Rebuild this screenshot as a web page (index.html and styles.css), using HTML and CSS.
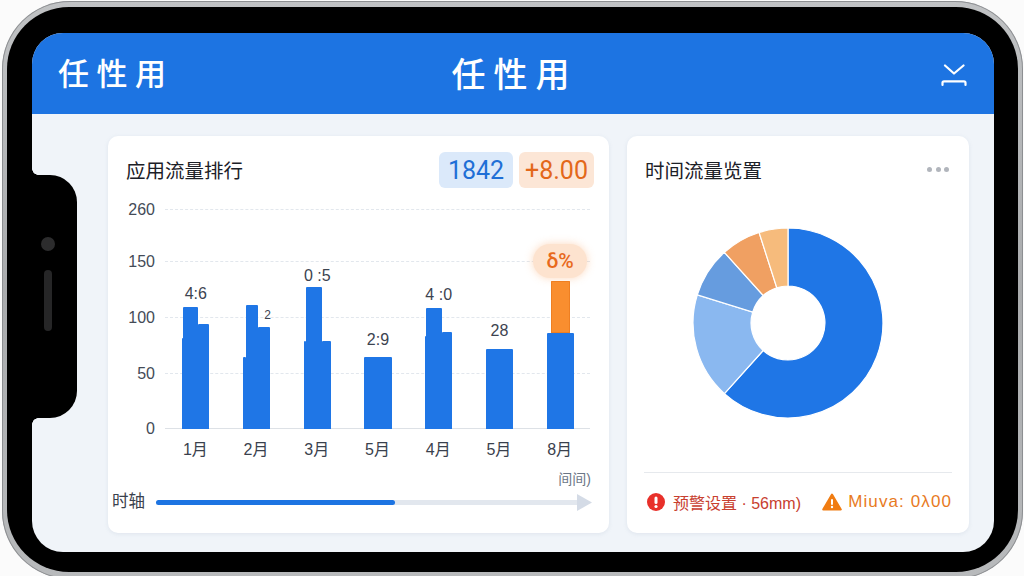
FILE: index.html
```html
<!DOCTYPE html>
<html lang="zh">
<head>
<meta charset="utf-8">
<title>任性用</title>
<link rel="stylesheet" href="styles.css">
</head>
<body>
<div class="phone">
  <div class="bezel">
    <div class="screen">
      <div class="notch"><span class="camera"></span><span class="speaker"></span></div>
      <header class="appbar">
        <div class="app-title">任性用</div>
        <div class="app-center">任性用</div>
        <svg class="app-icon" width="26" height="24" viewBox="0 0 26 24"><path d="M4 1.500l9 8 9.500-8M1.500 21v-2.200q0-1.500 1.500-1.500h20q1.500 0 1.500 1.500V21" fill="none" stroke="#fff" stroke-width="2.200" stroke-linecap="round" stroke-linejoin="round"/></svg>
      </header>
      <main class="content">
        <section class="card card-rank">
          <div class="card-head head-rank">
            <h2 class="card-title">应用流量排行</h2>
            <div class="badges"><span class="badge badge-blue">1842</span><span class="badge badge-orange">+8.00</span></div>
          </div>
          <div class="chart">
            <div class="row row-first"><span class="tick">260</span><span class="line"></span></div>
            <div class="row"><span class="tick">150</span><span class="line"></span></div>
            <div class="row"><span class="tick">100</span><span class="line"></span></div>
            <div class="row row-short"><span class="tick">50</span><span class="line"></span></div>
            <div class="row row-last"><span class="tick">0</span><span class="line line-base"></span></div>
            <div class="bars">
              <div class="slot"><span class="val val-a">4:6</span><div class="bar"><i style="width:1px;height:91px"></i><i style="width:15px;height:122px"></i><i style="width:11px;height:105px"></i></div></div>
              <div class="slot"><span class="val val-tiny">2</span><div class="bar"><i style="width:3px;height:72px"></i><i style="width:12.500px;height:124px"></i><i style="width:12px;height:102px"></i></div></div>
              <div class="slot"><span class="val val-c">0 :5</span><div class="bar"><i style="width:2px;height:88px"></i><i style="width:16px;height:142px"></i><i style="width:9px;height:88px"></i></div></div>
              <div class="slot"><span class="val val-d">2:9</span><div class="bar"><i style="width:28px;height:72px"></i></div></div>
              <div class="slot"><span class="val val-a">4 :0</span><div class="bar"><i style="width:1.500px;height:93px"></i><i style="width:16px;height:121px"></i><i style="width:10px;height:97px"></i></div></div>
              <div class="slot"><span class="val val-f">28</span><div class="bar"><i style="width:27.500px;height:80px"></i></div></div>
              <div class="slot"><span class="pill">δ%</span><div class="bar bar-stack"><i class="seg-orange" style="width:19px;height:52px"></i><i style="width:27px;height:96px"></i></div></div>
            </div>
          </div>
          <div class="months"><span>1月</span><span>2月</span><span>3月</span><span>5月</span><span>4月</span><span>5月</span><span>8月</span></div>
          <div class="note">间间)</div>
          <div class="timeline">
            <span class="timeline-label">时轴</span>
            <div class="track"><div class="track-fill" style="width:239px"></div></div>
            <svg class="track-arrow" width="15" height="17" viewBox="0 0 15 17"><path d="M0 0l15 8.500L0 17z" fill="#d4dbe6"/></svg>
          </div>
        </section>
        <section class="card card-time">
          <div class="card-head">
            <h2 class="card-title">时间流量览置</h2>
            <div class="dots"><span></span><span></span><span></span></div>
          </div>
          <svg class="donut" width="192" height="192" viewBox="-96 -96 192 192">
            <g stroke="#fff" stroke-width="1.200">
              <path fill="#1f76e6" d="M0-95A95 95 0 1 1-63.600 70.600L-24.800 27.500A37 37 0 1 0 0-37Z"/>
              <path fill="#8ab8f0" d="M-63.600 70.600A95 95 0 0 1-90.700-28.100L-35.300-10.900A37 37 0 0 0-24.800 27.500Z"/>
              <path fill="#669cdf" d="M-90.700-28.100A95 95 0 0 1-63.600-70.600L-24.800-27.500A37 37 0 0 0-35.300-10.900Z"/>
              <path fill="#f0a062" d="M-63.600-70.600A95 95 0 0 1-28.900-90.500L-11.200-35.200A37 37 0 0 0-24.800-27.500Z"/>
              <path fill="#f6bb7c" d="M-28.900-90.500A95 95 0 0 1 0-95V-37A37 37 0 0 0-11.200-35.200Z"/>
            </g>
          </svg>
          <div class="divider"></div>
          <div class="alerts">
            <div class="alert alert-red">
              <svg width="18" height="18" viewBox="0 0 18 18"><circle cx="9" cy="9" r="9" fill="#e8302a"/><rect x="7.500" y="3.500" width="3" height="7.500" rx="1.500" fill="#fff"/><circle cx="9" cy="13.500" r="1.600" fill="#fff"/></svg>
              <span>预警设置 · 56mm)</span>
            </div>
            <div class="alert alert-orange">
              <svg width="20" height="18" viewBox="0 0 20 18"><path d="M10 1.500L18.800 16.500H1.200Z" fill="#f07c12" stroke="#f07c12" stroke-width="2" stroke-linejoin="round"/><rect x="9" y="6" width="2" height="6" rx="1" fill="#fff"/><circle cx="10" cy="14" r="1.200" fill="#fff"/></svg>
              <span class="alert-wide">Miuva: 0λ00</span>
            </div>
          </div>
        </section>
      </main>
    </div>
  </div>
</div>
</body>
</html>
```
FILE: styles.css
```css
* { box-sizing: border-box; }
html, body { margin: 0; height: 576px; overflow: hidden; background: #fbfbfb; }
body { font-family: "Liberation Sans", "Noto Sans CJK SC", sans-serif; color: #333a46; }

.phone {
  width: 1021px;
  height: 578px;
  margin: 1px 1px 0 2px;
  padding: 6px 5px 7px;
  border-radius: 68px;
  background: linear-gradient(180deg, #c0c2c4, #a9abad 50%, #b8babc);
  box-shadow: inset 0 0 0 1px #8d8f92;
}
.bezel {
  height: 100%;
  padding: 26px 24px 20px 25px;
  border-radius: 62px;
  background: #000;
}
.screen {
  position: relative;
  height: 519px;
  display: flex;
  flex-direction: column;
  border-radius: 31px;
  background: #f0f4f9;
}

.notch {
  position: absolute;
  left: 0;
  top: 142px;
  width: 45px;
  height: 243px;
  padding: 62px 13px 0 0;
  display: flex;
  flex-direction: column;
  align-items: center;
  gap: 19px;
  border-radius: 0 27px 27px 0;
  background: #000;
}
.notch::before, .notch::after {
  content: "";
  position: absolute;
  left: 0;
  width: 6px;
  height: 6px;
}
.notch::before { top: -6px; background: radial-gradient(circle at 100% 0, transparent 5.500px, #000 6px); }
.notch::after { bottom: -6px; background: radial-gradient(circle at 100% 100%, transparent 5.500px, #000 6px); }
.camera { flex: none; width: 14px; height: 14px; border-radius: 50%; background: #2c2c2d; }
.speaker { flex: none; width: 8px; height: 61px; border-radius: 4px; background: #262627; }

.appbar {
  height: 81px;
  flex: none;
  padding: 2px 27px 0 26px;
  display: grid;
  grid-template-columns: 1fr auto 1fr;
  align-items: center;
  border-radius: 31px 31px 0 0;
  background: #1d74e2;
  color: #fff;
}
.app-title { font-size: 31px; font-weight: 500; letter-spacing: 7.500px; line-height: 40px; }
.app-center { margin-left: 4px; font-size: 34px; font-weight: 500; letter-spacing: 8px; line-height: 40px; }
.app-icon { justify-self: end; margin-top: 2px; }

.content {
  flex: 1;
  padding: 22px 25px 19px 76px;
  display: grid;
  grid-template-columns: 501px 342px;
  gap: 18px;
}
.card {
  border-radius: 10px;
  background: #fff;
  box-shadow: 0 1px 4px rgba(120, 140, 170, .14);
  padding-top: 16px;
}
.card-rank { padding-left: 4px; padding-right: 15px; }
.card-time { padding-left: 18px; padding-right: 17px; }

.card-head { height: 36px; display: flex; align-items: center; justify-content: space-between; }
.head-rank { padding-left: 14px; }
.card-title { margin: -2px 0 0; font-size: 19.500px; font-weight: 400; color: #1c2027; }
.badges { display: flex; gap: 6px; }
.badge {
  height: 36px;
  display: flex;
  align-items: center;
  justify-content: center;
  border-radius: 6px;
  font-family: Roboto, "Liberation Sans", sans-serif;
  font-weight: 400;
  font-size: 25px;
}
.badge-blue { width: 74px; background: #dbe9fa; color: #1f6fd6; }
.badge-orange { width: 75px; background: #fce6d6; color: #e3681a; }
.dots { display: flex; gap: 3.500px; padding-right: 3px; margin-top: -2px; }
.dots span { width: 5px; height: 5px; border-radius: 50%; background: #b1b5bc; }

.chart { position: relative; margin: 13px 4px 0 14px; }
.row { height: 16px; margin-bottom: 40px; display: flex; align-items: center; }
.row-last { margin-bottom: 0; }
.row-first { margin-bottom: 36px; }
.row-short { margin-bottom: 39px; }
.tick { width: 29px; margin-right: 10px; padding-top: 1px; text-align: right; font-size: 16px; line-height: 16px; color: #444b57; }
.line { flex: 1; border-top: 1px dashed #e2e7ed; }
.line-base { border-top: 1px solid #dde1e6; }

.bars {
  position: absolute;
  left: 39.500px;
  right: -0.500px;
  bottom: 7.500px;
  display: grid;
  grid-template-columns: repeat(7, 1fr);
  align-items: end;
}
.slot { position: relative; display: flex; flex-direction: column; align-items: center; }
.bar { display: flex; align-items: flex-end; }
.bar i { display: block; background: #1f76e6; border-radius: 1px 1px 0 0; }
.bar-stack { flex-direction: column; align-items: center; }
.bar i.seg-orange { background: #f98e2f; box-shadow: 0 0 0 1px #ee7f22 inset; }
.val { font-size: 16px; line-height: 18px; color: #3c4350; }
.val-a { margin-bottom: 4px; }
.val-c { margin-bottom: 2px; }
.val-d { margin-bottom: 8px; }
.val-f { margin-bottom: 9px; }
.val-tiny { position: absolute; left: 38px; bottom: 107px; font-size: 12px; line-height: 14px; }
.pill {
  width: 54px;
  height: 34px;
  margin-bottom: 3px;
  display: flex;
  align-items: center;
  justify-content: center;
  border-radius: 17px;
  background: #fde3cf;
  box-shadow: 0 0 8px rgba(250, 170, 110, .45);
  font-family: Roboto, "Liberation Sans", sans-serif;
  font-weight: 500;
  font-size: 21px;
  color: #e8691c;
}

.months {
  margin: 3.500px 4px 0 53px;
  display: grid;
  grid-template-columns: repeat(7, 1fr);
  justify-items: center;
  font-size: 16px;
  line-height: 20px;
  color: #3a414d;
}
.note { margin: 11px 3px 0 0; text-align: right; font-size: 14px; line-height: 16px; color: #6b7686; }
.timeline { margin: 6px 2px 0 0; height: 20px; display: flex; align-items: center; }
.timeline-label { width: 44px; margin-bottom: 3px; font-size: 16.500px; line-height: 20px; color: #3a414d; }
.track { flex: 1; height: 5px; margin-right: -1px; border-radius: 3px 0 0 3px; background: #e2e7ee; }
.track-fill { height: 100%; border-radius: 3px; background: #1d74e2; }
.track-arrow { flex: none; }

.donut { display: block; margin: 39px 0 0 47px; }
.divider { margin: 53px 0 0 -1px; border-top: 1px solid #e6e9ed; }
.alerts { margin-top: 19px; height: 20px; display: flex; justify-content: space-between; font-size: 16px; }
.alert { display: flex; align-items: center; }
.alert-red { gap: 8px; margin-left: 2px; color: #c8402f; }
.alert-orange { gap: 6px; color: #e87a1e; }
.alert-wide { font-size: 17px; letter-spacing: 1.100px; }
```
